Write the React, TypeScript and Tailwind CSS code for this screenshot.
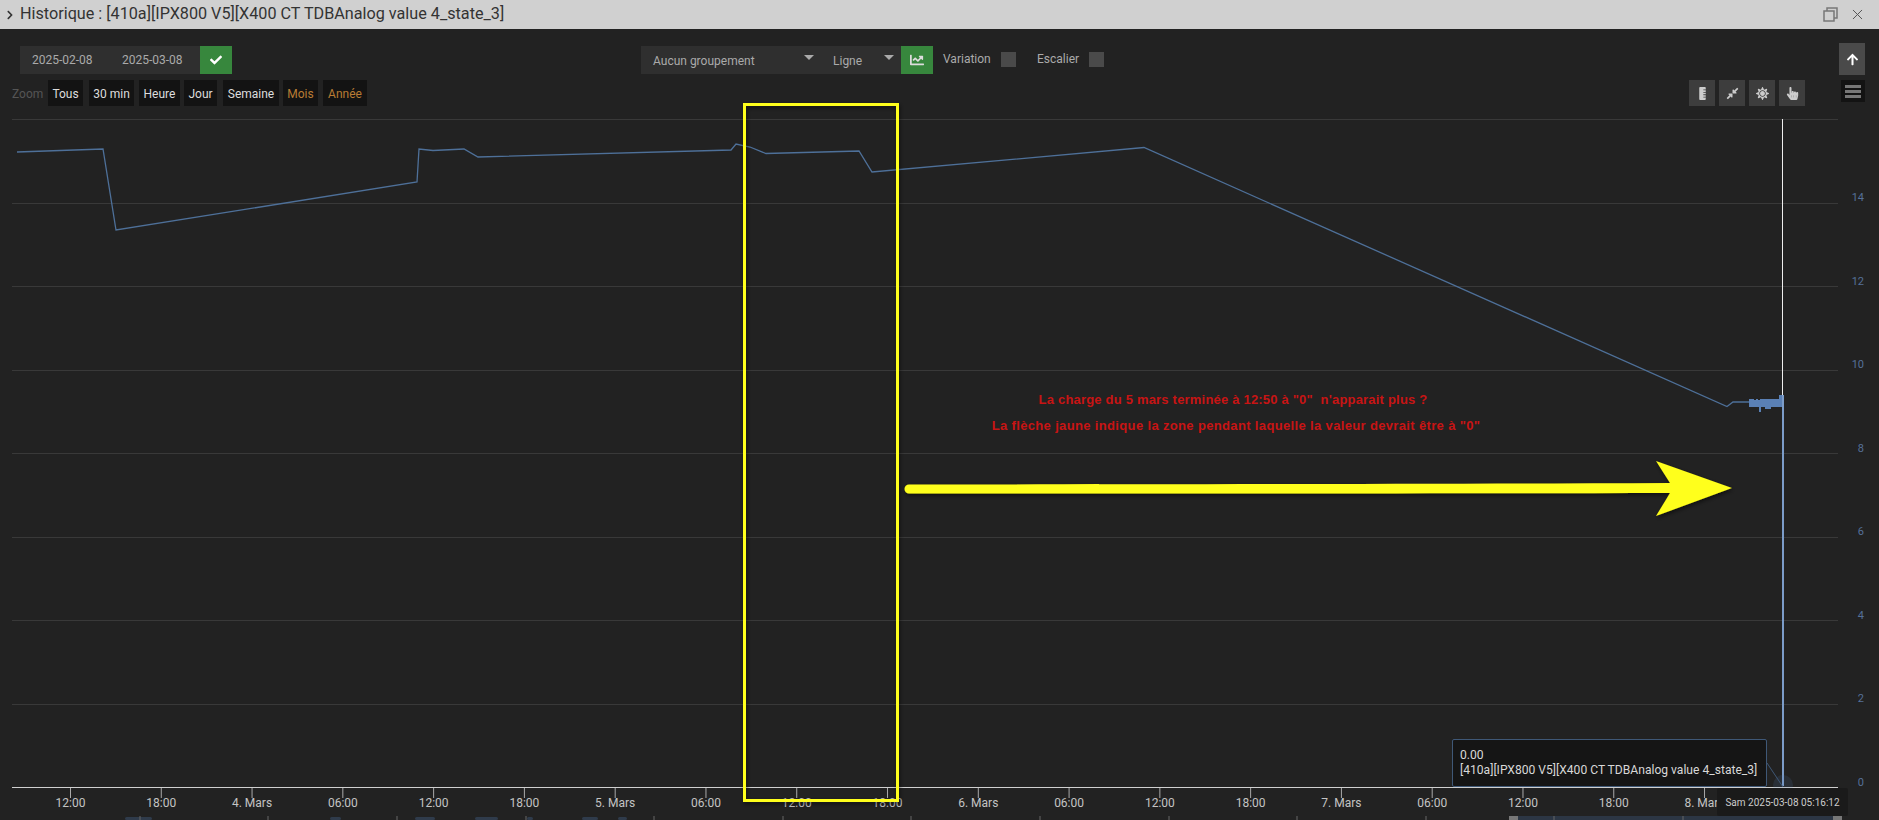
import React from "react";
import { FaArrowUp, FaChartLine, FaCheck, FaChevronRight, FaCompressAlt, FaHandPointer, FaRulerVertical, FaSun } from "react-icons/fa";
import { X } from "lucide-react";

const zoomButtons = [
  { label: "Tous", width: "w-[35px]", left: "ml-[5px]", color: "text-[#dddddd]" },
  { label: "30 min", width: "w-[45px]", left: "ml-[6px]", color: "text-[#dddddd]" },
  { label: "Heure", width: "w-[41px]", left: "ml-[5px]", color: "text-[#dddddd]" },
  { label: "Jour", width: "w-[33px]", left: "ml-[4px]", color: "text-[#dddddd]" },
  { label: "Semaine", width: "w-[56px]", left: "ml-[6px]", color: "text-[#dddddd]" },
  { label: "Mois", width: "w-[35px]", left: "ml-[4px]", color: "text-[#b97c34]" },
  { label: "Année", width: "w-[44px]", left: "ml-[5px]", color: "text-[#b97c34]" },
];

const gridLines = [119, 203, 286, 370, 453, 537, 620, 704];
const yLabels = [
  { y: 201, v: "14" },
  { y: 285, v: "12" },
  { y: 368, v: "10" },
  { y: 452, v: "8" },
  { y: 535, v: "6" },
  { y: 619, v: "4" },
  { y: 702, v: "2" },
  { y: 786, v: "0" },
];
const xLabels = [
  "12:00", "18:00", "4. Mars", "06:00", "12:00", "18:00", "5. Mars", "06:00", "12:00", "18:00",
  "6. Mars", "06:00", "12:00", "18:00", "7. Mars", "06:00", "12:00", "18:00", "8. Mars",
];
const navTicks = [140, 268, 397, 526, 654, 783, 911, 1040, 1169, 1297, 1426, 1554, 1683];
const navHumps = [
  [125, 27], [330, 11], [415, 20], [475, 23], [527, 6], [582, 16], [618, 9],
];

const linePoints =
  "17,152 103,149 116,230 417,182 419,149 433,150.5 464,149 478,157 731,150 736,144 750,147 766,153.5 859,151 872,172 1144,147.5 1727,406.5 1733,402 1750,402";

export default function App() {
  return (
    <div className="flex h-[820px] w-full flex-col overflow-hidden bg-[#222222] font-['Roboto',sans-serif]">
      <div className="flex h-[29px] shrink-0 items-center bg-[#d0d0d0] pl-[5px] text-[#333333]">
        <FaChevronRight className="text-[10px]" />
        <span className="ml-[5px] text-[16.2px] leading-none">
          Historique : [410a][IPX800 V5][X400 CT TDBAnalog value 4_state_3]
        </span>
        <svg className="ml-auto" width="15" height="15" viewBox="0 0 15 15" fill="none" stroke="#777777" strokeWidth="1.5">
          <rect x="1" y="4" width="10" height="10" />
          <path d="M4 4V1h10v10h-3" />
        </svg>
        <X className="ml-[11px] mr-[13px] h-[17px] w-[17px] text-[#555555]" strokeWidth={1.4} />
      </div>

      <div className="flex h-[51px] shrink-0 items-start">
        <div className="ml-[20px] mt-[17px] flex h-[28px] items-center bg-[#2f2f2f] text-[12px] text-[#aaaaaa]">
          <span className="ml-[12px] w-[90px]">2025-02-08</span>
          <span className="w-[78px]">2025-03-08</span>
          <span className="flex h-[28px] w-[32px] items-center justify-center bg-[#37873d] text-white">
            <FaCheck className="text-[12px]" />
          </span>
        </div>
        <div className="ml-[409px] mt-[17px] flex h-[28px] items-center bg-[#2f2f2f] text-[12px] text-[#aaaaaa]">
          <span className="ml-[12px] mt-[2px] w-[151px]">Aucun groupement</span>
          <span className="mb-[6px] h-0 w-0 border-x-[5px] border-t-[5px] border-x-transparent border-t-[#aaaaaa]" />
          <span className="ml-[19px] mt-[2px] w-[51px]">Ligne</span>
          <span className="mb-[6px] mr-[7px] h-0 w-0 border-x-[5px] border-t-[5px] border-x-transparent border-t-[#aaaaaa]" />
          <span className="flex h-[28px] w-[32px] items-center justify-center bg-[#37873d] text-[#dddddd]">
            <FaChartLine className="text-[14px]" />
          </span>
        </div>
        <div className="ml-[10px] mt-[21px] flex items-start text-[12px] text-[#aaaaaa]">
          <span className="w-[58px]">Variation</span>
          <span className="mt-[2px] h-[15px] w-[15px] bg-[#4a4a4a]" />
          <span className="ml-[21px] w-[52px]">Escalier</span>
          <span className="mt-[2px] h-[15px] w-[15px] bg-[#4a4a4a]" />
        </div>
        <button className="ml-[735px] mt-[14px] flex h-[32px] w-[26px] items-center justify-center bg-[#4a4a4a] text-white">
          <FaArrowUp className="text-[13px]" />
        </button>
      </div>

      <div className="flex h-[27px] shrink-0 items-start">
        <span className="ml-[12px] flex h-[28px] w-[31px] items-center text-[12px] text-[#555555]">Zoom</span>
        {zoomButtons.map((b) => (
          <span
            key={b.label}
            className={`flex h-[26px] items-center justify-center bg-[#131313] pt-[2px] text-[12px] ${b.width} ${b.left} ${b.color}`}
          >
            {b.label}
          </span>
        ))}
        <div className="ml-[1322px] flex gap-[4px] text-[13px] text-[#cccccc]">
          <span className="flex h-[26px] w-[26px] items-center justify-center bg-[#3d3d3d]"><FaRulerVertical /></span>
          <span className="flex h-[26px] w-[26px] items-center justify-center bg-[#3d3d3d]"><FaCompressAlt /></span>
          <span className="flex h-[26px] w-[26px] items-center justify-center bg-[#3d3d3d]"><FaSun /></span>
          <span className="flex h-[26px] w-[26px] items-center justify-center bg-[#3d3d3d]"><FaHandPointer /></span>
        </div>
        <span className="ml-[36px] flex h-[22px] w-[24px] flex-col items-center justify-center gap-[2px] bg-[#131313]">
          <span className="h-[3px] w-[16px] bg-[#777777]" />
          <span className="h-[3px] w-[16px] bg-[#777777]" />
          <span className="h-[3px] w-[16px] bg-[#777777]" />
        </span>
      </div>

      <div className="relative flex-1">
        <svg className="block overflow-visible" width="1879" height="713" viewBox="0 107 1879 713" fontFamily="Roboto, sans-serif">
          <defs>
            <filter id="soft" x="-20%" y="-20%" width="140%" height="140%">
              <feDropShadow dx="1" dy="2" stdDeviation="2" floodColor="#000000" floodOpacity="0.55" />
            </filter>
          </defs>
          {gridLines.map((y) => (
            <line key={y} x1="12" x2="1838" y1={y + 0.5} y2={y + 0.5} stroke="#393939" />
          ))}
          <line x1="12" x2="1838" y1="787.5" y2="787.5" stroke="#d0d0d0" />
          {xLabels.map((label, i) => {
            const x = 70.5 + i * 90.78;
            return (
              <g key={i}>
                <line x1={x} x2={x} y1="788" y2="798" stroke="#aaaaaa" />
                <text x={x} y="807" textAnchor="middle" fontSize="12" fill="#c4c4c4">{label}</text>
              </g>
            );
          })}
          {yLabels.map((l) => (
            <text key={l.v} x="1864" y={l.y} textAnchor="end" fontSize="11" fill="#557099">{l.v}</text>
          ))}

          <rect x="1518" y="816" width="315" height="4" fill="#2c3644" />
          <rect x="1509" y="816" width="9" height="4" fill="#777777" />
          <rect x="1833" y="816" width="9" height="4" fill="#777777" />
          {navHumps.map(([x, w]) => (
            <rect key={x} x={x} y="817" width={w} height="3" rx="1.5" fill="#2f3b4b" />
          ))}
          {navTicks.map((x) => (
            <line key={x} x1={x} x2={x} y1="816" y2="820" stroke="#666666" />
          ))}

          <polyline points={linePoints} fill="none" stroke="#4e7099" strokeWidth="1.3" />
          <line x1="1782.5" x2="1782.5" y1="119" y2="395" stroke="#eeeeee" />
          <path d="M1749 399h5v1h2v-1h2v1h2v-1h19v-4h4v12h-12v2h-6v-2h-4v5h-2v-5h-10z" fill="#5a80b5" />
          <line x1="1783" x2="1783" y1="395" y2="786" stroke="#7c9cc8" strokeWidth="2" />
          <circle cx="1783" cy="785" r="10" fill="#5a80b5" fillOpacity="0.15" />
          <line x1="1767" y1="763" x2="1783" y2="787" stroke="#3f5877" />

          <rect x="744.5" y="104.5" width="153" height="696" fill="none" stroke="#ffff1a" strokeWidth="3" filter="url(#soft)" />
          <path
            d="M909 484.5C1100 484.5 1400 484 1670 483L1656 461L1732 488L1656 516L1670 493C1400 493.5 1100 493.5 909 493.5a4.5 4.5 0 0 1 0-9z"
            fill="#ffff1a"
            filter="url(#soft)"
          />
        </svg>

        <div className="absolute left-[960px] top-[283px] w-[552px] text-center font-['Liberation_Sans',sans-serif] text-[13px] font-bold tracking-[0.2px] text-[#c81414]">
          <p className="h-[26px] whitespace-pre pr-[6px]">La charge du 5 mars terminée à 12:50 à "0"  n'apparait plus ?</p>
          <p className="whitespace-pre tracking-[0.35px]">La flèche jaune indique la zone pendant laquelle la valeur devrait être à "0"</p>
        </div>

        <div className="absolute left-[1452px] top-[632px] h-[48px] w-[315px] rounded-[2px] border border-[#3f5877] bg-[#151515] pl-[7px] pt-[8px] text-[12.1px] leading-[15px] text-[#d8d8d8]">
          <p>0.00</p>
          <p className="whitespace-nowrap">[410a][IPX800 V5][X400 CT TDBAnalog value 4_state_3]</p>
        </div>
        <div className="absolute left-[1717px] top-[681px] flex h-[28px] w-[131px] items-center justify-center rounded-[2px] bg-[#1a1a1a] pt-[1px] text-[10px] text-[#cccccc]">
          Sam 2025-03-08 05:16:12
        </div>
      </div>
    </div>
  );
}
